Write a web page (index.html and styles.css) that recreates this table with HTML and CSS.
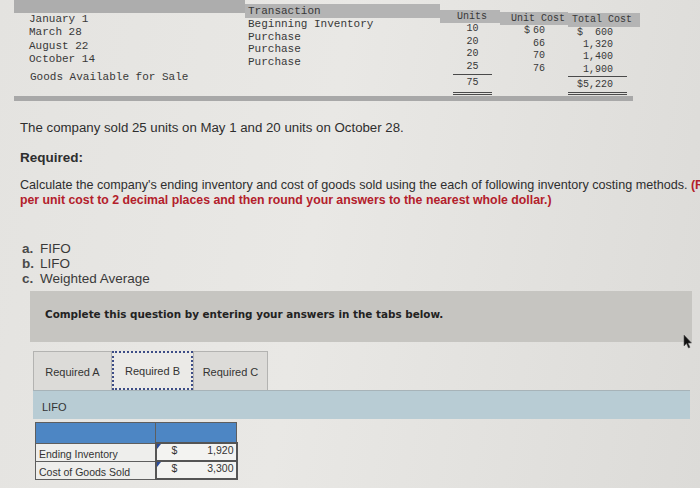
FILE: index.html
```html
<!DOCTYPE html>
<html>
<head>
<meta charset="utf-8">
<link rel="stylesheet" href="styles.css">
</head>
<body>
<div class="page">
  <div class="inv">
    <div class="col c-date">
      <div class="hd">&nbsp;</div>
      <div class="cell">January 1</div>
      <div class="cell">March 28</div>
      <div class="cell">August 22</div>
      <div class="cell">October 14</div>
      <div class="cell tot">Goods Available for Sale</div>
    </div>
    <div class="col c-tr">
      <div class="hd">Transaction</div>
      <div class="cell">Beginning Inventory</div>
      <div class="cell">Purchase</div>
      <div class="cell">Purchase</div>
      <div class="cell">Purchase</div>
    </div>
    <div class="col c-units">
      <div class="hd">Units</div>
      <div class="cell">10</div>
      <div class="cell">20</div>
      <div class="cell">20</div>
      <div class="cell rule">25</div>
      <div class="cell dbl">75</div>
    </div>
    <div class="col c-uc">
      <div class="hd">Unit Cost</div>
      <div class="cell"><span class="dol">$</span>60</div>
      <div class="cell">66</div>
      <div class="cell">70</div>
      <div class="cell">76</div>
    </div>
    <div class="col c-tc">
      <div class="hd">Total Cost</div>
      <div class="cell">$  600</div>
      <div class="cell">1,320</div>
      <div class="cell">1,400</div>
      <div class="cell rule">1,900</div>
      <div class="cell dbl">$5,220</div>
    </div>
  </div>
  <div class="inv-foot"></div>

  <p class="sold">The company sold 25 units on May 1 and 20 units on October 28.</p>
  <p class="req">Required:</p>
  <p class="calc">Calculate the company's ending inventory and cost of goods sold using the each of following inventory costing methods. <span class="red">(Round your</span><br><span class="red">per unit cost to 2 decimal places and then round your answers to the nearest whole dollar.)</span></p>

  <ol class="methods">
    <li><span class="lt">a.</span>FIFO</li>
    <li><span class="lt">b.</span>LIFO</li>
    <li><span class="lt">c.</span>Weighted Average</li>
  </ol>

  <div class="notice">Complete this question by entering your answers in the tabs below.</div>

  <div class="tabs">
    <div class="tab">Required A</div>
    <div class="tab active">Required B</div>
    <div class="tab">Required C</div>
  </div>
  <div class="band">LIFO</div>

  <table class="ans">
    <tr class="ans-hd"><th></th><th></th></tr>
    <tr><td class="lbl">Ending Inventory</td><td class="val"><div class="inp"><span class="flag"></span><span>$</span><span>1,920</span></div></td></tr>
    <tr><td class="lbl">Cost of Goods Sold</td><td class="val"><div class="inp"><span class="flag"></span><span>$</span><span>3,300</span></div></td></tr>
  </table>

  <svg class="cursor" width="10" height="15" viewBox="0 0 10 15"><path d="M1 1 L1 12 L3.5 9.5 L5.5 14 L7 13.3 L5 9 L8.5 9 Z" fill="#111" stroke="#555" stroke-width="0.6"/></svg>
</div>
</body>
</html>
```

FILE: styles.css
```css
html, body {
  margin: 0;
  padding: 0;
}
body {
  width: 700px;
  height: 488px;
  overflow: hidden;
  background: #e2e1de;
}
.page {
  position: relative;
  width: 700px;
  height: 488px;
  overflow: hidden;
  background: linear-gradient(100deg, #e4e3e0 0%, #e9e8e5 45%, #dcdbd8 100%);
  color: #2e2e2e;
  font-family: "Liberation Sans", Arial, sans-serif;
}

/* inventory table */
.inv {
  display: flex;
  align-items: flex-start;
  margin-left: 14px;
  width: 626px;
  font-family: "Liberation Mono", "Courier New", monospace;
  color: #383838;
}
.col {
  flex: none;
}
.col .hd {
  background: #b4b4b4;
  white-space: pre;
}
.c-date {
  width: 231px;
  font-size: 11px;
  background: linear-gradient(to bottom, #adadad 0, #adadad 12px, transparent 12px);
}
.c-date .hd {
  height: 13px;
  line-height: 13px;
  border-top: 12px solid #adadad;
  box-sizing: border-box;
  background: #adadad;
}
.c-date .cell {
  line-height: 13.3px;
  padding-left: 15px;
}
.c-date .tot {
  margin-top: 5px;
  padding-left: 16px;
}
.c-tr {
  width: 195px;
  margin-top: 4px;
  font-size: 11px;
}
.c-tr .hd {
  height: 14px;
  line-height: 14px;
  padding-left: 3px;
}
.c-tr .cell {
  line-height: 12.7px;
  padding-left: 3px;
}
.c-units {
  width: 60px;
  margin-top: 10px;
  font-size: 10px;
  text-align: center;
}
.c-units .hd {
  height: 13px;
  line-height: 13px;
  padding-left: 4px;
}
.c-units .cell {
  line-height: 12.7px;
  margin-left: 13px;
  width: 39px;
}
.c-units .rule {
  border-bottom: 1px solid #4a4a4a;
}
.c-units .dbl {
  padding-top: 2px;
  padding-bottom: 2px;
  border-bottom: 3px double #4a4a4a;
}
.c-uc {
  width: 68px;
  margin-top: 12px;
  font-size: 10px;
}
.c-uc .hd {
  height: 13px;
  line-height: 13px;
  padding-left: 11px;
}
.c-uc .cell {
  line-height: 12.5px;
  text-align: right;
  padding-right: 23px;
}
.c-uc .dol { margin-right: 3px; }
.c-tc {
  width: 72px;
  margin-top: 13px;
  font-size: 10px;
}
.c-tc .hd {
  height: 14px;
  line-height: 14px;
  padding-left: 4px;
}
.c-tc .cell {
  line-height: 12.2px;
  text-align: right;
  padding-right: 14px;
  margin-right: 13px;
  white-space: pre;
}
.c-tc .rule {
  border-bottom: 1px solid #4a4a4a;
}
.c-tc .dbl {
  padding-top: 2px;
  padding-bottom: 1px;
  border-bottom: 3px double #4a4a4a;
}
.inv-foot {
  margin: 1px 0 0 14px;
  width: 619px;
  height: 5px;
  background: #a8a8a8;
}

/* problem text */
p { margin: 0; }
.sold {
  margin: 19px 0 0 20px;
  font-size: 13.25px;
  line-height: 16px;
}
.req {
  margin: 14px 0 0 20px;
  font-size: 13.5px;
  line-height: 16px;
  font-weight: bold;
}
.calc {
  margin: 12px 0 0 20px;
  font-size: 12.6px;
  line-height: 15px;
  white-space: nowrap;
}
.red {
  color: #b3202b;
  font-weight: bold;
  font-size: 12.3px;
}
.methods {
  list-style: none;
  margin: 33px 0 0 22px;
  padding: 0;
  font-size: 13.5px;
  line-height: 15px;
  color: #3a3a3a;
}
.lt {
  display: inline-block;
  width: 18px;
  font-weight: bold;
  color: #4a4a4a;
}

.notice {
  margin: 5px 0 0 30px;
  height: 51px;
  padding-left: 15px;
  box-sizing: border-box;
  width: 662px;
  background: #c6c5c1;
  font-family: "DejaVu Sans", Verdana, sans-serif;
  font-weight: bold;
  font-size: 10.4px;
  line-height: 47px;
  color: #222;
}

/* tabs */
.tabs {
  display: flex;
  margin: 9px 0 0 33px;
  height: 39px;
}
.tab {
  width: 79px;
  box-sizing: border-box;
  background: #dcdbd8;
  border: 1px solid #b3b3b1;
  border-bottom: none;
  font-size: 11px;
  line-height: 40px;
  text-align: center;
  color: #333;
}
.tab.active {
  width: 81px;
  background: #ebeae7;
  border: 2px dotted #3d4d86;
  line-height: 37px;
}
.tab:last-child { width: 75px; }
.band {
  margin-left: 33px;
  width: 657px;
  height: 29px;
  background: #b8ccd4;
  border-top: 1px solid #a7b3b8;
  box-sizing: border-box;
  padding: 3px 0 0 9px;
  font-size: 11px;
  line-height: 26px;
  color: #333;
}

/* answer table */
.ans {
  margin: 3px 0 0 35px;
  border-collapse: collapse;
  font-size: 10.5px;
  color: #333;
}
.ans td, .ans th {
  border: 1px solid #5e5e5e;
  padding: 0;
}
.ans-hd th {
  background: #4d86c4;
  height: 19px;
}
.ans-hd th:first-child { width: 119px; }
.ans-hd th:last-child { width: 80px; }
.ans td {
  height: 16px;
  background: #eeeeec;
  line-height: 12px;
}
.lbl {
  padding-left: 3px !important;
  vertical-align: bottom;
  padding-bottom: 1px !important;
}
.val {
  vertical-align: top;
  background: #f3f3f1 !important;
  border: 2px solid #555 !important;
}
.inp {
  position: relative;
  display: flex;
  justify-content: space-between;
  padding: 0 2px 0 15px;
}
.flag {
  position: absolute;
  left: 0;
  top: 0;
  width: 0;
  height: 0;
  border-top: 5px solid #2a4c9c;
  border-right: 4px solid transparent;
}

.cursor {
  position: absolute;
  left: 683px;
  top: 334px;
}
```
